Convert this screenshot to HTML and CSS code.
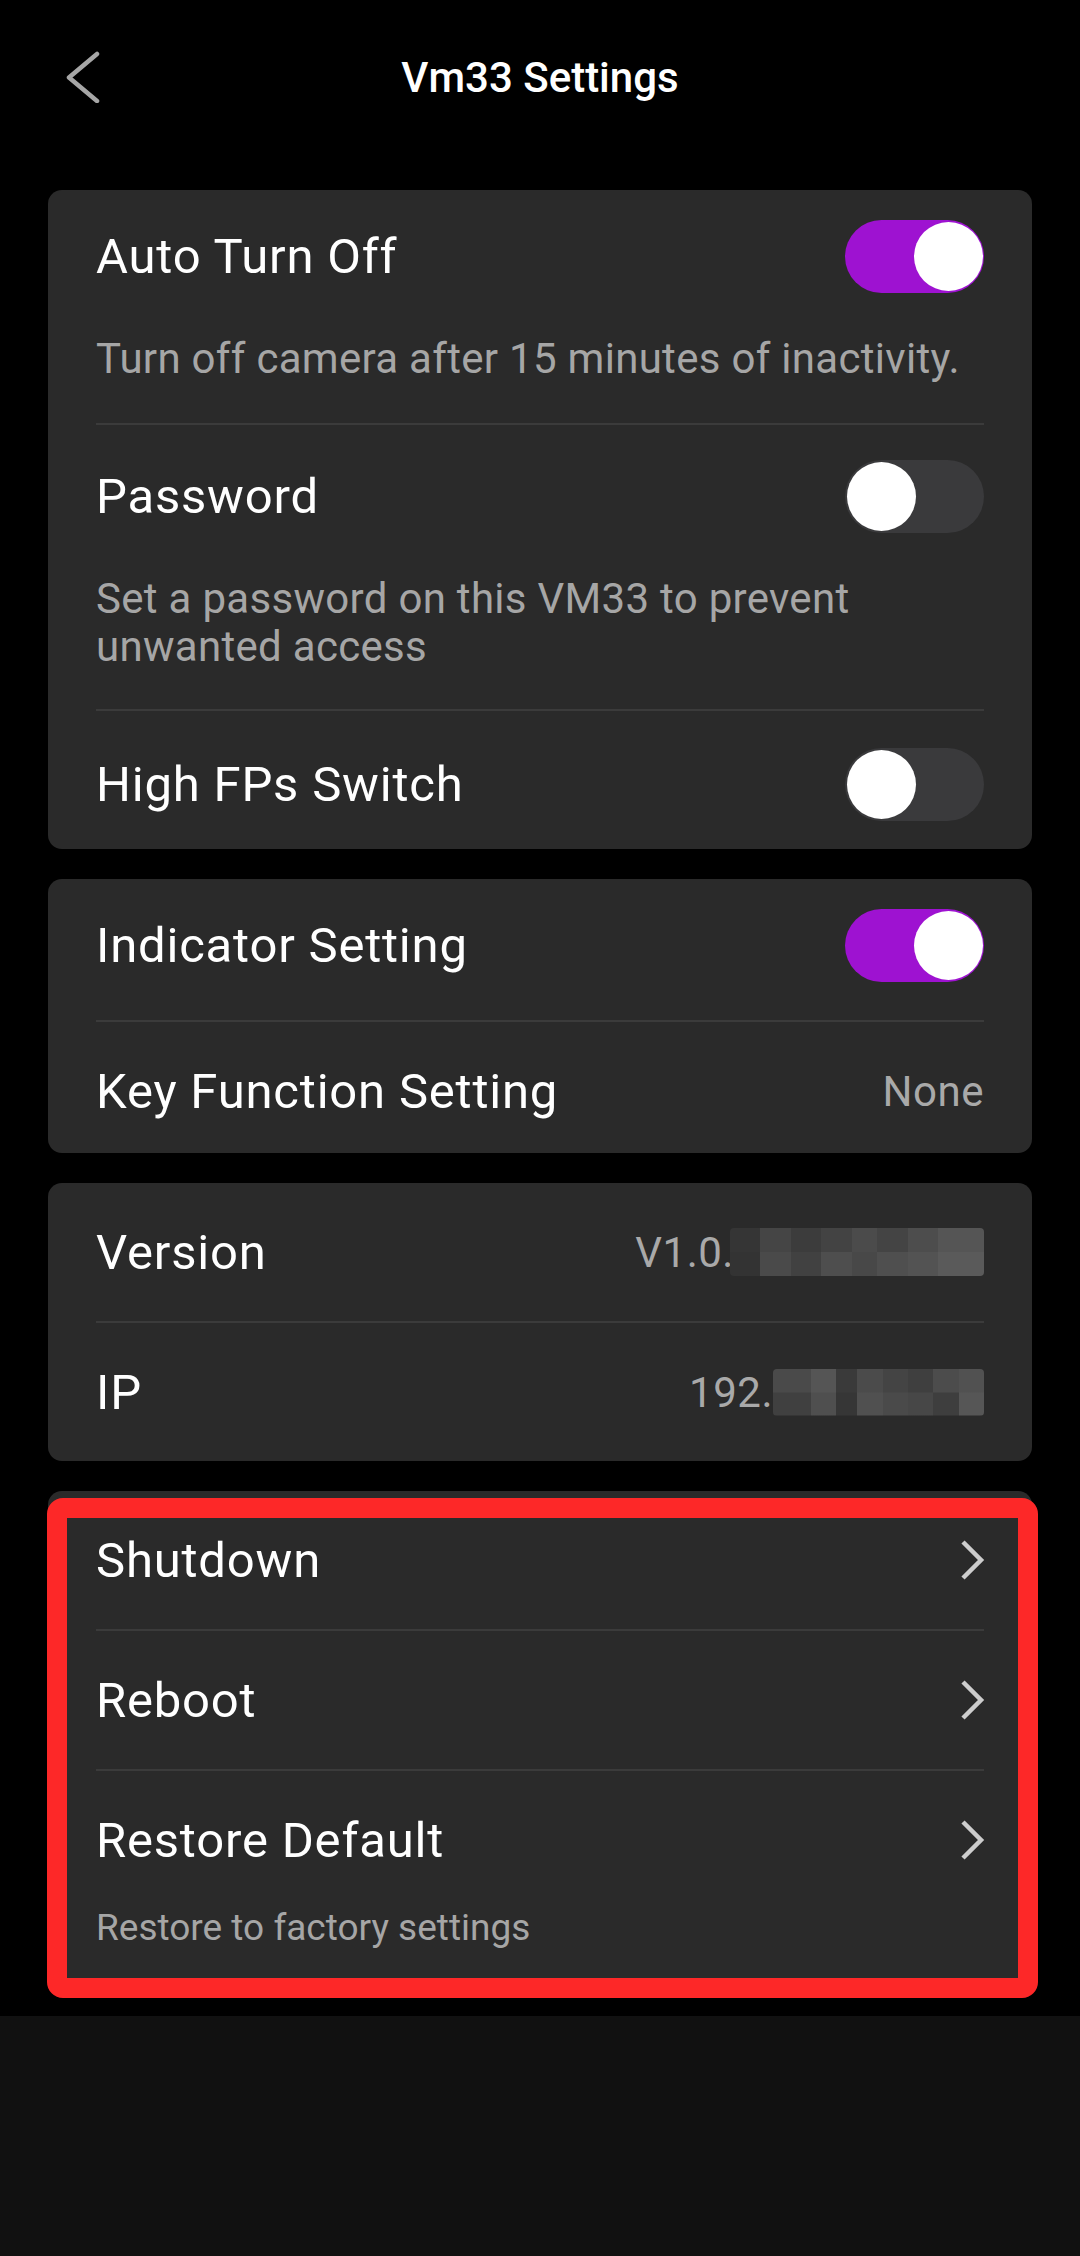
FILE: index.html
```html
<!DOCTYPE html>
<html>
<head>
    <title>Vm33 Settings</title>
    <link rel="stylesheet" href="styles.css">
</head>
<body>
    <div class="screen">
        <header class="topbar">
            <span class="back">
                <svg width="34" height="52" viewBox="0 0 34 52">
                    <polyline points="31,3 3,26.5 31,50" fill="none" stroke="#a6a6a6" stroke-width="4.5" stroke-linecap="round" stroke-linejoin="round"/>
                </svg>
            </span>
            <h1>Vm33 Settings</h1>
            <span></span>
        </header>

        <main class="content">
            <!-- camera options -->
            <section class="card">
                <div class="row first">
                    <div class="row-head">
                        <span class="label">Auto Turn Off</span>
                        <span class="switch on"></span>
                    </div>
                    <p class="desc">Turn off camera after 15 minutes of inactivity.</p>
                </div>
                <div class="row lower">
                    <div class="row-head">
                        <span class="label">Password</span>
                        <span class="switch"></span>
                    </div>
                    <p class="desc">Set a password on this VM33 to prevent unwanted access</p>
                </div>
                <div class="row last">
                    <div class="row-head">
                        <span class="label">High FPs Switch</span>
                        <span class="switch"></span>
                    </div>
                </div>
            </section>

            <!-- light and key -->
            <section class="card">
                <div class="row first tall">
                    <div class="row-head">
                        <span class="label">Indicator Setting</span>
                        <span class="switch on"></span>
                    </div>
                </div>
                <div class="row last short">
                    <div class="row-head">
                        <span class="label">Key Function Setting</span>
                        <span class="value">None</span>
                    </div>
                </div>
            </section>

            <!-- device info -->
            <section class="card">
                <div class="row">
                    <div class="row-head">
                        <span class="label">Version</span>
                        <span class="value masked">V1.0.0<span class="pixels version"></span></span>
                    </div>
                </div>
                <div class="row">
                    <div class="row-head">
                        <span class="label">IP</span>
                        <span class="value masked">192.<span class="pixels ip"></span></span>
                    </div>
                </div>
            </section>

            <!-- device actions -->
            <section class="card marked">
                <div class="row">
                    <div class="row-head">
                        <span class="label">Shutdown</span>
                        <svg class="arrow" width="26" height="42" viewBox="0 0 26 42">
                            <polyline points="3,3 21,21 3,39" fill="none" stroke="#cdcdcd" stroke-width="4.5" stroke-linejoin="miter"/>
                        </svg>
                    </div>
                </div>
                <div class="row">
                    <div class="row-head">
                        <span class="label">Reboot</span>
                        <svg class="arrow" width="26" height="42" viewBox="0 0 26 42">
                            <polyline points="3,3 21,21 3,39" fill="none" stroke="#cdcdcd" stroke-width="4.5" stroke-linejoin="miter"/>
                        </svg>
                    </div>
                </div>
                <div class="row">
                    <div class="row-head">
                        <span class="label">Restore Default</span>
                        <svg class="arrow" width="26" height="42" viewBox="0 0 26 42">
                            <polyline points="3,3 21,21 3,39" fill="none" stroke="#cdcdcd" stroke-width="4.5" stroke-linejoin="miter"/>
                        </svg>
                    </div>
                    <p class="desc small">Restore to factory settings</p>
                </div>
            </section>
        </main>

        <div class="bottom-bar"></div>
    </div>
</body>
</html>
```

FILE: styles.css
```css
body {
    margin: 0;
    background: #000;
    color: #fff;
    font-family: Roboto, "Liberation Sans", sans-serif;
}
.screen {
    width: 1080px;
    min-height: 2256px;
    display: flex;
    flex-direction: column;
}
.topbar {
    height: 154px;
    display: grid;
    grid-template-columns: 1fr auto 1fr;
    align-items: center;
    margin-bottom: 36px;
}
.back {
    display: flex;
    padding-left: 66px;
}
.topbar h1 {
    margin: 0;
    font-size: 42px;
    font-weight: 500;
    letter-spacing: 0;
}
.content {
    padding: 0 48px 26px;
    display: flex;
    flex-direction: column;
    gap: 30px;
}
.card {
    background: #2a2a2a;
    border-radius: 14px;
    padding: 0 48px;
}
.row {
    padding: 33px 0;
}
.row + .row {
    border-top: 2px solid #3b3b3b;
}
.row.first {
    padding-top: 30px;
}
.row.lower {
    padding-top: 35px;
}
.row.lower .desc {
    margin-bottom: 5px;
}
.row.tall {
    padding-bottom: 38px;
}
.row.last {
    padding: 37px 0 28px;
}
.row.short {
    padding: 33px 0 26px;
}
.row-head {
    min-height: 72px;
    display: flex;
    align-items: center;
    justify-content: space-between;
}
.label {
    font-size: 49px;
    letter-spacing: 0.8px;
}
.value {
    font-size: 42px;
    color: #a9a9a9;
    letter-spacing: 0.5px;
}
.masked {
    display: flex;
    align-items: center;
}
.desc {
    margin: 42px 0 7px;
    font-size: 42px;
    line-height: 48px;
    color: #a6a6a6;
    letter-spacing: 0.3px;
}
.desc.small {
    margin: 30px 0 7px;
    font-size: 37px;
    line-height: 44px;
    letter-spacing: 0;
}
.switch {
    width: 139px;
    height: 73px;
    border-radius: 37px;
    background: #3a3a3c;
    position: relative;
}
.switch::after {
    content: '';
    position: absolute;
    top: 2px;
    left: 2px;
    width: 69px;
    height: 69px;
    border-radius: 50%;
    background: #fff;
}
.switch.on {
    background: #9e12d1;
}
.switch.on::after {
    left: auto;
    right: 1px;
}
.pixels {
    display: block;
    height: 48px;
    border-radius: 4px;
}
.pixels.version {
    width: 254px;
    margin-left: -28px;
    background:
        linear-gradient(90deg, #353535 0 12%, #454545 12% 24%, #3c3c3c 24% 36%, #434343 36% 48%, #4b4b4b 48% 58%, #444 58% 70%, #4d4d4d 70% 82%, #555 82% 100%) top / 100% 50% no-repeat,
        linear-gradient(90deg, #333 0 12%, #4a4a4a 12% 24%, #414141 24% 36%, #4e4e4e 36% 48%, #484848 48% 58%, #4f4f4f 58% 70%, #535353 70% 82%, #5a5a5a 82% 100%) bottom / 100% 50% no-repeat;
}
.pixels.ip {
    width: 211px;
    height: 47px;
    background:
        linear-gradient(90deg, #4a4a4a 0 18%, #555 18% 30%, #3a3a3a 30% 40%, #4b4b4b 40% 52%, #444 52% 64%, #3f3f3f 64% 76%, #4c4c4c 76% 88%, #515151 88% 100%) top / 100% 50% no-repeat,
        linear-gradient(90deg, #404040 0 18%, #4f4f4f 18% 30%, #363636 30% 40%, #505050 40% 52%, #4a4a4a 52% 64%, #474747 64% 76%, #3e3e3e 76% 88%, #565656 88% 100%) bottom / 100% 50% no-repeat;
}
.arrow {
    margin-right: -2px;
}
.card.marked {
    position: relative;
}
/* red highlight frame drawn over the last card */
.card.marked::after {
    content: '';
    position: absolute;
    top: 7px;
    left: -1px;
    right: -6px;
    bottom: -8px;
    border: 20px solid #fd2828;
    border-radius: 16px;
}
.bottom-bar {
    flex: 1;
    background: #111;
}
```
